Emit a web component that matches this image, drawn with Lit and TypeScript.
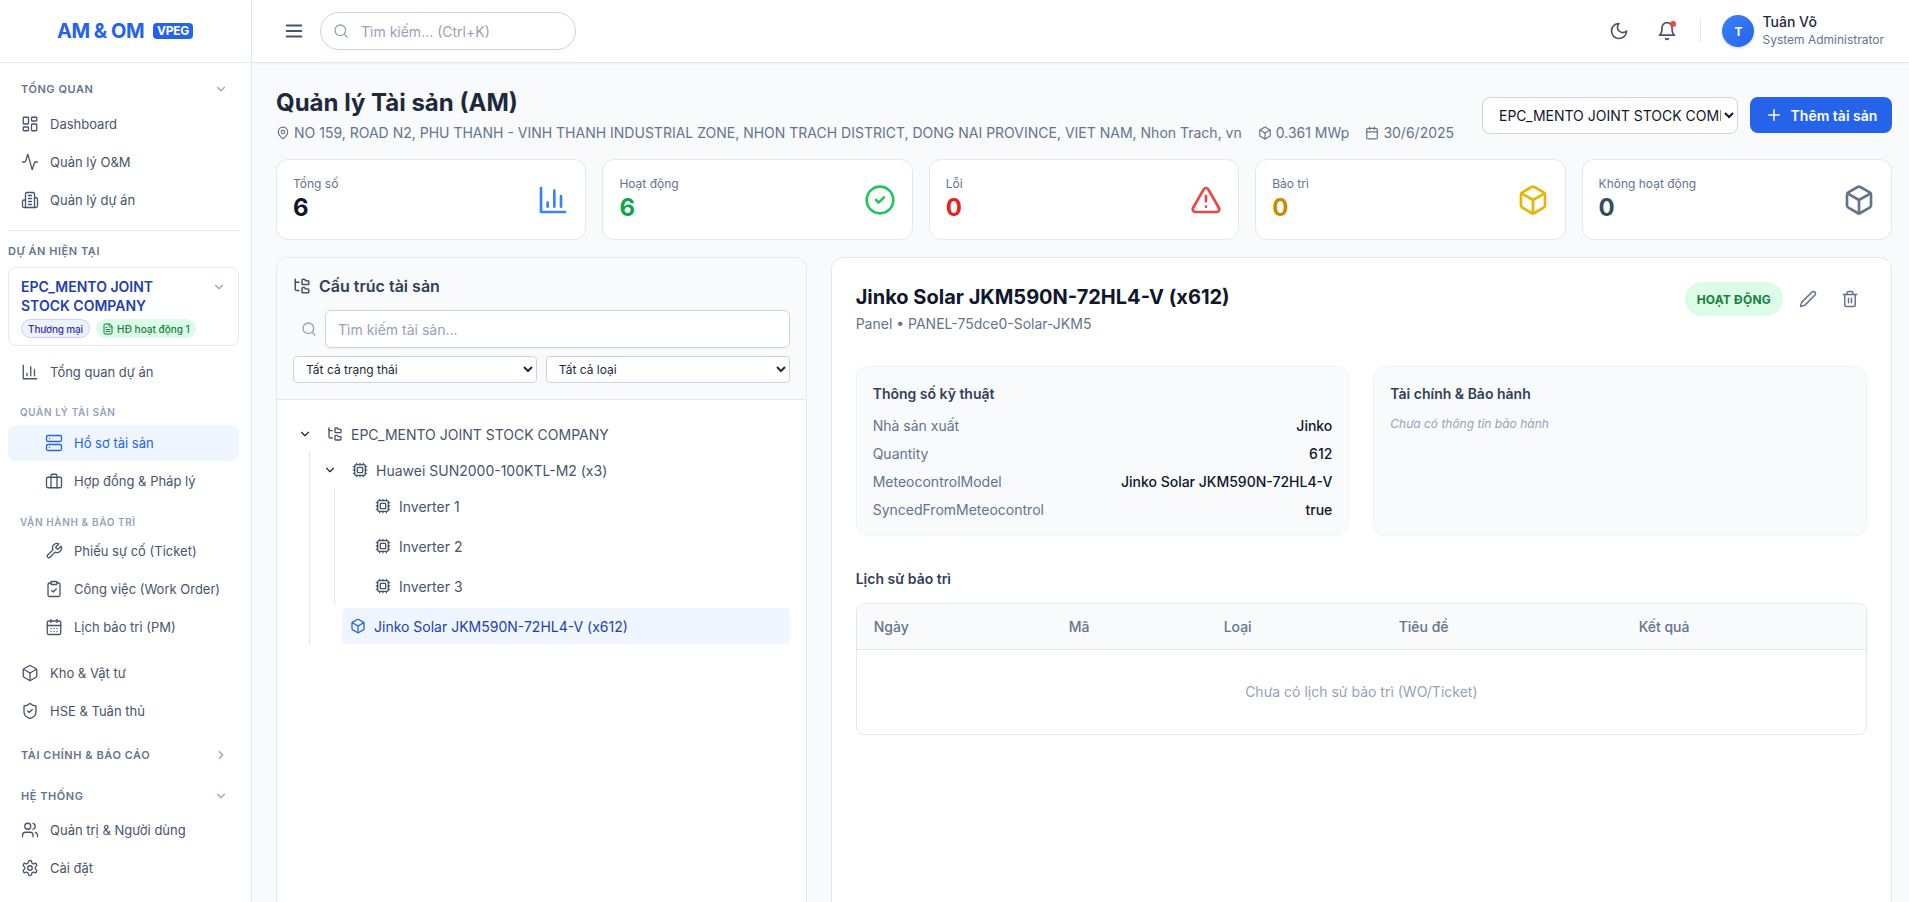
import { LitElement, html, svg, css } from 'lit';
import { customElement } from 'lit/decorators.js';

// lucide-style outlines, keyed by name
const ICONS: Record<string, unknown> = {
  dashboard: svg`<rect x="3" y="3" width="7" height="9" rx="1"/><rect x="14" y="3" width="7" height="5" rx="1"/><rect x="14" y="12" width="7" height="9" rx="1"/><rect x="3" y="16" width="7" height="5" rx="1"/>`,
  activity: svg`<path d="M22 12h-2.48a2 2 0 0 0-1.93 1.46l-2.35 8.36a.25.25 0 0 1-.48 0L9.24 2.18a.25.25 0 0 0-.48 0l-2.35 8.36A2 2 0 0 1 4.49 12H2"/>`,
  building: svg`<path d="M6 22V4a2 2 0 0 1 2-2h8a2 2 0 0 1 2 2v18Z"/><path d="M6 12H4a2 2 0 0 0-2 2v6a2 2 0 0 0 2 2h2"/><path d="M18 9h2a2 2 0 0 1 2 2v9a2 2 0 0 1-2 2h-2"/><path d="M10 6h4M10 10h4M10 14h4M10 18h4"/>`,
  chart: svg`<path d="M3 3v18h18"/><path d="M18 17V9"/><path d="M13 17V5"/><path d="M8 17v-3"/>`,
  server: svg`<rect x="2" y="2" width="20" height="8" rx="2"/><rect x="2" y="14" width="20" height="8" rx="2"/><path d="M6 6h.01M6 18h.01"/>`,
  briefcase: svg`<rect x="2" y="7" width="20" height="14" rx="2"/><path d="M16 21V5a2 2 0 0 0-2-2h-4a2 2 0 0 0-2 2v16"/>`,
  wrench: svg`<path d="M14.7 6.3a1 1 0 0 0 0 1.4l1.6 1.6a1 1 0 0 0 1.4 0l3.77-3.77a6 6 0 0 1-7.94 7.94l-6.91 6.91a2.12 2.12 0 0 1-3-3l6.91-6.91a6 6 0 0 1 7.94-7.94l-3.76 3.76z"/>`,
  clipboard: svg`<rect x="8" y="2" width="8" height="4" rx="1"/><path d="M16 4h2a2 2 0 0 1 2 2v14a2 2 0 0 1-2 2H6a2 2 0 0 1-2-2V6a2 2 0 0 1 2-2h2"/><path d="m9 14 2 2 4-4"/>`,
  calendarDays: svg`<path d="M8 2v4M16 2v4"/><rect x="3" y="4" width="18" height="18" rx="2"/><path d="M3 10h18M8 14h.01M12 14h.01M16 14h.01M8 18h.01M12 18h.01M16 18h.01"/>`,
  calendar: svg`<path d="M8 2v4M16 2v4"/><rect x="3" y="4" width="18" height="18" rx="2"/><path d="M3 10h18"/>`,
  box: svg`<path d="M21 8a2 2 0 0 0-1-1.73l-7-4a2 2 0 0 0-2 0l-7 4A2 2 0 0 0 3 8v8a2 2 0 0 0 1 1.73l7 4a2 2 0 0 0 2 0l7-4A2 2 0 0 0 21 16Z"/><path d="m3.3 7 8.7 5 8.7-5"/><path d="M12 22V12"/>`,
  shield: svg`<path d="M20 13c0 5-3.5 7.5-7.66 8.95a1 1 0 0 1-.67-.01C7.5 20.5 4 18 4 13V6a1 1 0 0 1 1-1c2 0 4.5-1.2 6.24-2.72a1.17 1.17 0 0 1 1.52 0C14.51 3.81 17 5 19 5a1 1 0 0 1 1 1z"/><path d="m9 12 2 2 4-4"/>`,
  users: svg`<path d="M16 21v-2a4 4 0 0 0-4-4H6a4 4 0 0 0-4 4v2"/><circle cx="9" cy="7" r="4"/><path d="M22 21v-2a4 4 0 0 0-3-3.87"/><path d="M16 3.13a4 4 0 0 1 0 7.75"/>`,
  settings: svg`<path d="M12.22 2h-.44a2 2 0 0 0-2 2v.18a2 2 0 0 1-1 1.73l-.43.25a2 2 0 0 1-2 0l-.15-.08a2 2 0 0 0-2.73.73l-.22.38a2 2 0 0 0 .73 2.73l.15.1a2 2 0 0 1 1 1.72v.51a2 2 0 0 1-1 1.74l-.15.09a2 2 0 0 0-.73 2.73l.22.38a2 2 0 0 0 2.73.73l.15-.08a2 2 0 0 1 2 0l.43.25a2 2 0 0 1 1 1.73V20a2 2 0 0 0 2 2h.44a2 2 0 0 0 2-2v-.18a2 2 0 0 1 1-1.73l.43-.25a2 2 0 0 1 2 0l.15.08a2 2 0 0 0 2.73-.73l.22-.39a2 2 0 0 0-.73-2.73l-.15-.08a2 2 0 0 1-1-1.74v-.5a2 2 0 0 1 1-1.74l.15-.09a2 2 0 0 0 .73-2.73l-.22-.38a2 2 0 0 0-2.73-.73l-.15.08a2 2 0 0 1-2 0l-.43-.25a2 2 0 0 1-1-1.73V4a2 2 0 0 0-2-2z"/><circle cx="12" cy="12" r="3"/>`,
  file: svg`<path d="M15 2H6a2 2 0 0 0-2 2v16a2 2 0 0 0 2 2h12a2 2 0 0 0 2-2V7Z"/><path d="M14 2v4a2 2 0 0 0 2 2h4"/><path d="M10 9H8M16 13H8M16 17H8"/>`,
  down: svg`<path d="m6 9 6 6 6-6"/>`,
  right: svg`<path d="m9 18 6-6-6-6"/>`,
  menu: svg`<path d="M4 6h16M4 12h16M4 18h16"/>`,
  search: svg`<circle cx="11" cy="11" r="8"/><path d="m21 21-4.3-4.3"/>`,
  moon: svg`<path d="M12 3a6 6 0 0 0 9 9 9 9 0 1 1-9-9Z"/>`,
  bell: svg`<path d="M6 8a6 6 0 0 1 12 0c0 7 3 9 3 9H3s3-2 3-9"/><path d="M10.3 21a1.94 1.94 0 0 0 3.4 0"/>`,
  pin: svg`<path d="M20 10c0 6-8 12-8 12s-8-6-8-12a8 8 0 0 1 16 0Z"/><circle cx="12" cy="10" r="3"/>`,
  plus: svg`<path d="M5 12h14M12 5v14"/>`,
  check: svg`<circle cx="12" cy="12" r="10"/><path d="m9 12 2 2 4-4"/>`,
  alert: svg`<path d="m21.73 18-8-14a2 2 0 0 0-3.48 0l-8 14A2 2 0 0 0 4 21h16a2 2 0 0 0 1.73-3"/><path d="M12 9v4M12 17h.01"/>`,
  pencil: svg`<path d="M17 3a2.85 2.83 0 1 1 4 4L7.5 20.5 2 22l1.5-5.5Z"/>`,
  trash: svg`<path d="M3 6h18"/><path d="M19 6v14c0 1-1 2-2 2H7c-1 0-2-1-2-2V6"/><path d="M8 6V4c0-1 1-2 2-2h4c1 0 2 1 2 2v2"/><path d="M10 11v6M14 11v6"/>`,
  cpu: svg`<rect x="4" y="4" width="16" height="16" rx="2"/><rect x="8" y="8" width="8" height="8" rx="1"/><path d="M12 20v2M12 2v2M17 20v2M17 2v2M2 12h2M2 17h2M2 7h2M20 12h2M20 17h2M20 7h2M7 20v2M7 2v2"/>`,
  tree: svg`<path d="M20 10a1 1 0 0 0 1-1V6a1 1 0 0 0-1-1h-2.5a1 1 0 0 1-.8-.4l-.9-1.2A1 1 0 0 0 15 3h-2a1 1 0 0 0-1 1v5a1 1 0 0 0 1 1Z"/><path d="M20 21a1 1 0 0 0 1-1v-3a1 1 0 0 0-1-1h-2.9a1 1 0 0 1-.88-.55l-.42-.85a1 1 0 0 0-.92-.6H13a1 1 0 0 0-1 1v5a1 1 0 0 0 1 1Z"/><path d="M3 5a2 2 0 0 0 2 2h3"/><path d="M3 3v13a2 2 0 0 0 2 2h3"/>`,
};

const icon = (name: string, size = 18, width = 2) => html`
  <svg class="ic" width=${size} height=${size} viewBox="0 0 24 24" fill="none" stroke="currentColor"
    stroke-width=${width} stroke-linecap="round" stroke-linejoin="round">${ICONS[name]}</svg>
`;

const STATS = [
  { label: 'Tổng số', value: '6', color: '#0f172a', ic: 'chart', tone: '#3b82f6' },
  { label: 'Hoạt động', value: '6', color: '#16a34a', ic: 'check', tone: '#22c55e' },
  { label: 'Lỗi', value: '0', color: '#dc2626', ic: 'alert', tone: '#ef4444' },
  { label: 'Bảo trì', value: '0', color: '#ca8a04', ic: 'box', tone: '#eab308' },
  { label: 'Không hoạt động', value: '0', color: '#3b4a61', ic: 'box', tone: '#64748b' },
];

const SPECS = [
  ['Nhà sản xuất', 'Jinko'],
  ['Quantity', '612'],
  ['MeteocontrolModel', 'Jinko Solar JKM590N-72HL4-V'],
  ['SyncedFromMeteocontrol', 'true'],
];

const COLUMNS = [
  ['Ngày', 195],
  ['Mã', 155],
  ['Loại', 175],
  ['Tiêu đề', 240],
  ['Kết quả', 200],
] as const;

@customElement('app-sidebar')
export class AppSidebar extends LitElement {
  static override styles = css`
    :host {
      display: block;
      width: 252px;
      height: 902px;
      flex: none;
      background: #fff;
      border-right: 1px solid #e2e8f0;
      box-sizing: border-box;
      overflow: hidden;
    }
    .ic { flex: none; display: block; }
    .logo {
      height: 63px;
      box-sizing: border-box;
      border-bottom: 1px solid #e2e8f0;
      display: flex;
      align-items: center;
      justify-content: center;
      gap: 9px;
      padding-right: 1px;
    }
    .logo b {
      font-size: 20px;
      font-weight: 700;
      letter-spacing: -0.5px;
      color: #2563eb;
    }
    .logo span {
      background: #2563eb;
      color: #fff;
      font-size: 12px;
      font-weight: 700;
      line-height: 16px;
      padding: 0 4px;
      border-radius: 4px;
      letter-spacing: -0.3px;
    }
    nav { display: flex; flex-direction: column; padding: 12px 12px 0 8px; }
    .section {
      height: 28px;
      flex: none;
      display: flex;
      align-items: center;
      justify-content: space-between;
      padding: 0 11px 0 13px;
      font-size: 11px;
      font-weight: 600;
      letter-spacing: 0.55px;
      color: #64748b;
      margin-bottom: 3px;
    }
    .section .ic { color: #94a3b8; }
    .item {
      height: 36px;
      flex: none;
      margin-bottom: 2px;
      display: flex;
      align-items: center;
      gap: 11px;
      padding-left: 13px;
      font-size: 13px;
      color: #475569;
      border-radius: 8px;
    }
    .item.sub { padding-left: 37px; }
    .item.active { background: #eff6ff; color: #2563eb; }
    .rule { border-top: 1px solid #e2e8f0; margin: 10px 0 12px; }
    .current {
      font-size: 11px;
      line-height: 16px;
      font-weight: 600;
      letter-spacing: 0.55px;
      color: #64748b;
      margin-bottom: 8px;
    }
    .project {
      height: 79px;
      flex: none;
      box-sizing: border-box;
      border: 1px solid #e2e8f0;
      border-radius: 8px;
      padding: 9px 12px 0;
      margin-bottom: 8px;
    }
    .project-top { display: flex; justify-content: space-between; }
    .project-name {
      font-size: 14px;
      line-height: 19px;
      font-weight: 600;
      color: #1e40af;
      width: 160px;
    }
    .project-top .ic { color: #94a3b8; margin: 3px 0 0; }
    .chips { display: flex; gap: 6px; margin-top: 4px; }
    .chip {
      height: 19px;
      box-sizing: border-box;
      display: flex;
      align-items: center;
      gap: 3px;
      border-radius: 10px;
      font-size: 10px;
      font-weight: 500;
    }
    .chip.kind { background: #eef2ff; border: 1px solid #c7d2fe; color: #3730a3; padding: 0 6px; letter-spacing: -0.15px; }
    .chip.live { background: #dcfce7; color: #15803d; padding: 0 6px; }
    .group {
      font-size: 10px;
      line-height: 16px;
      font-weight: 600;
      letter-spacing: 0.6px;
      color: #94a3b8;
      padding-left: 12px;
      margin-top: 12px;
      margin-bottom: 5px;
    }
    .group.ops { margin-top: 13px; margin-bottom: 3px; }
    .after-ops { margin-top: 8px; }
    .section.finance { margin-top: 10px; margin-bottom: 13px; }
    .section.system { margin-bottom: 2px; }
  `;

  private item(label: string, ic: string, cls = '') {
    return html`<div class="item ${cls}">${icon(ic, 18, 1.75)}<span>${label}</span></div>`;
  }

  override render() {
    return html`
      <div class="logo"><b>AM &amp; OM</b><span>VPEG</span></div>
      <nav>
        <div class="section">TỔNG QUAN ${icon('down', 14)}</div>
        ${this.item('Dashboard', 'dashboard')}
        ${this.item('Quản lý O&M', 'activity')}
        ${this.item('Quản lý dự án', 'building')}
        <div class="rule"></div>
        <div class="current">DỰ ÁN HIỆN TẠI</div>
        <div class="project">
          <div class="project-top">
            <div class="project-name">EPC_MENTO JOINT STOCK COMPANY</div>
            ${icon('down', 14)}
          </div>
          <div class="chips">
            <span class="chip kind">Thương mại</span>
            <span class="chip live">${icon('file', 12)}HĐ hoạt động 1</span>
          </div>
        </div>
        ${this.item('Tổng quan dự án', 'chart')}
        <div class="group">QUẢN LÝ TÀI SẢN</div>
        ${this.item('Hồ sơ tài sản', 'server', 'sub active')}
        ${this.item('Hợp đồng & Pháp lý', 'briefcase', 'sub')}
        <div class="group ops">VẬN HÀNH & BẢO TRÌ</div>
        ${this.item('Phiếu sự cố (Ticket)', 'wrench', 'sub')}
        ${this.item('Công việc (Work Order)', 'clipboard', 'sub')}
        ${this.item('Lịch bảo trì (PM)', 'calendarDays', 'sub')}
        <div class="after-ops">
          ${this.item('Kho & Vật tư', 'box')}
          ${this.item('HSE & Tuân thủ', 'shield')}
        </div>
        <div class="section finance">TÀI CHÍNH & BÁO CÁO ${icon('right', 14)}</div>
        <div class="section system">HỆ THỐNG ${icon('down', 14)}</div>
        ${this.item('Quản trị & Người dùng', 'users')}
        ${this.item('Cài đặt', 'settings')}
      </nav>
    `;
  }
}

@customElement('app-topbar')
export class AppTopbar extends LitElement {
  static override styles = css`
    :host {
      display: flex;
      align-items: center;
      height: 63px;
      flex: none;
      box-sizing: border-box;
      background: #fff;
      border-bottom: 1px solid #e2e8f0;
      box-shadow: 0 1px 2px rgba(15, 23, 42, 0.04);
      padding: 0 25px 0 31px;
    }
    .ic { flex: none; display: block; }
    .burger { color: #475569; margin-right: 15px; }
    .search {
      width: 256px;
      height: 38px;
      box-sizing: border-box;
      border: 1px solid #cbd5e1;
      border-radius: 19px;
      display: flex;
      align-items: center;
      gap: 12px;
      padding-left: 12px;
      font-size: 14px;
      color: #94a3b8;
    }
    .spacer { flex: 1; }
    .tool { color: #475569; position: relative; }
    .moon { margin-right: 28px; }
    .dot {
      position: absolute;
      top: 0;
      right: 1px;
      width: 6px;
      height: 6px;
      border-radius: 50%;
      background: #ef4444;
    }
    .divider { width: 1px; height: 24px; background: #e2e8f0; margin: 0 21px 0 23px; }
    .avatar {
      width: 32px;
      height: 32px;
      border-radius: 50%;
      background: linear-gradient(135deg, #3b82f6, #2563eb);
      color: #fff;
      font-size: 12px;
      font-weight: 700;
      display: flex;
      align-items: center;
      justify-content: center;
      box-shadow: 0 1px 3px rgba(15, 23, 42, 0.2);
      margin-right: 8px;
    }
    .name { font-size: 14px; line-height: 18px; font-weight: 500; color: #1e293b; }
    .role { font-size: 12px; line-height: 18px; color: #64748b; }
  `;

  override render() {
    return html`
      <span class="burger">${icon('menu', 22)}</span>
      <div class="search">${icon('search', 16)}<span>Tìm kiếm... (Ctrl+K)</span></div>
      <div class="spacer"></div>
      <span class="tool moon">${icon('moon', 20)}</span>
      <span class="tool">${icon('bell', 20)}<i class="dot"></i></span>
      <div class="divider"></div>
      <div class="avatar">T</div>
      <div>
        <div class="name">Tuân Võ</div>
        <div class="role">System Administrator</div>
      </div>
    `;
  }
}

@customElement('asset-tree')
export class AssetTree extends LitElement {
  static override styles = css`
    :host {
      display: block;
      flex: 0 0 calc((100% - 24px) / 3);
      box-sizing: border-box;
      background: #fff;
      border: 1px solid #e2e8f0;
      border-radius: 12px;
      min-height: 800px;
      overflow: hidden;
    }
    .ic { flex: none; display: block; }
    .head {
      background: #f8fafc;
      border-bottom: 1px solid #e2e8f0;
      padding: 16px 16px 15px;
      height: 142px;
      box-sizing: border-box;
    }
    .title {
      display: flex;
      align-items: center;
      gap: 8px;
      height: 24px;
      font-size: 16px;
      font-weight: 600;
      color: #334155;
    }
    .title .ic { color: #475569; }
    .find { display: flex; align-items: center; gap: 8px; margin-top: 12px; }
    .find > .ic { color: #94a3b8; margin-left: 8px; }
    .find input {
      flex: 1;
      height: 38px;
      box-sizing: border-box;
      border: 1px solid #cbd5e1;
      border-radius: 6px;
      padding: 0 12px;
      font: 14px Inter, sans-serif;
      background: #fff;
      box-shadow: 0 1px 2px rgba(15, 23, 42, 0.05);
    }
    .find input::placeholder { color: #94a3b8; opacity: 1; }
    .filters { display: grid; grid-template-columns: 1fr 1fr; gap: 9px; margin-top: 8px; }
    select {
      height: 27px;
      width: 100%;
      box-sizing: border-box;
      border: 1px solid #cbd5e1;
      border-radius: 4px;
      background: #fff;
      color: #1e293b;
      padding: 0 8px;
      font: 12px Inter, sans-serif;
    }
    .tree { padding: 16px; display: flex; flex-direction: column; }
    .row { display: flex; align-items: center; height: 36px; font-size: 14px; color: #475569; }
    .toggle {
      width: 26px;
      height: 36px;
      flex: none;
      display: flex;
      align-items: center;
      padding-left: 5px;
      box-sizing: border-box;
      color: #1e293b;
    }
    .gap { width: 24px; flex: none; }
    .label {
      flex: 1;
      height: 36px;
      display: flex;
      align-items: center;
      gap: 8px;
      padding-left: 8px;
      border-radius: 4px;
    }
    .label.on { background: #eff6ff; color: #1e40af; }
    .label.on .ic { color: #2563eb; }
    .kids {
      margin-left: 16px;
      border-left: 1px solid #e2e8f0;
      padding-left: 8px;
      display: flex;
      flex-direction: column;
      gap: 4px;
    }
  `;

  private leaf(name: string, ic: string, on = false) {
    return html`<div class="row">
      <span class="gap"></span>
      <span class="label ${on ? 'on' : ''}">${icon(ic, 16)}${name}</span>
    </div>`;
  }

  private branch(name: string, ic: string) {
    return html`<div class="row">
      <span class="toggle">${icon('down', 14)}</span>
      <span class="label">${icon(ic, 16)}${name}</span>
    </div>`;
  }

  override render() {
    return html`
      <div class="head">
        <div class="title">${icon('tree', 18)}Cấu trúc tài sản</div>
        <div class="find">
          ${icon('search', 16)}
          <input placeholder="Tìm kiếm tài sản..." />
        </div>
        <div class="filters">
          <select><option>Tất cả trạng thái</option></select>
          <select><option>Tất cả loại</option></select>
        </div>
      </div>
      <div class="tree">
        ${this.branch('EPC_MENTO JOINT STOCK COMPANY', 'tree')}
        <div class="kids">
          <div>
            ${this.branch('Huawei SUN2000-100KTL-M2 (x3)', 'cpu')}
            <div class="kids">
              ${this.leaf('Inverter 1', 'cpu')}
              ${this.leaf('Inverter 2', 'cpu')}
              ${this.leaf('Inverter 3', 'cpu')}
            </div>
          </div>
          ${this.leaf('Jinko Solar JKM590N-72HL4-V (x612)', 'box', true)}
        </div>
      </div>
    `;
  }
}

@customElement('asset-detail')
export class AssetDetail extends LitElement {
  static override styles = css`
    :host {
      display: block;
      flex: 1 1 0;
      min-width: 0;
      background: #fff;
      border: 1px solid #e2e8f0;
      border-radius: 12px;
      min-height: 800px;
      padding: 24px;
    }
    .ic { flex: none; display: block; }
    .top { display: flex; justify-content: space-between; align-items: flex-start; height: 84px; }
    h2 { margin: 0; font-size: 20px; line-height: 30px; font-weight: 700; color: #0f172a; }
    .sub { font-size: 14px; line-height: 20px; margin-top: 2px; color: #64748b; }
    .actions { display: flex; align-items: center; gap: 8px; }
    .badge {
      height: 34px;
      display: flex;
      align-items: center;
      padding: 0 12px;
      border-radius: 17px;
      background: #dcfce7;
      color: #15803d;
      font-size: 12px;
      font-weight: 700;
      letter-spacing: 0.2px;
    }
    .btn { width: 34px; height: 34px; display: flex; align-items: center; justify-content: center; color: #64748b; }
    .cards { display: grid; grid-template-columns: 1fr 1fr; gap: 24px; }
    .card {
      height: 170px;
      box-sizing: border-box;
      background: #f8fafc;
      border: 1px solid #f1f5f9;
      border-radius: 12px;
      padding: 17px 16px;
    }
    h3 { margin: 0 0 12px; font-size: 14px; line-height: 20px; font-weight: 600; color: #334155; }
    .spec { display: flex; justify-content: space-between; font-size: 14px; line-height: 20px; margin-bottom: 8px; color: #64748b; }
    .spec b { font-weight: 500; color: #0f172a; }
    .none { font-size: 12px; line-height: 16px; font-style: italic; color: #94a3b8; }
    h4 { margin: 33px 0 14px; font-size: 14px; line-height: 20px; font-weight: 600; color: #334155; }
    .table { border: 1px solid #e2e8f0; border-radius: 8px; overflow: hidden; }
    .thead {
      display: flex;
      height: 45px;
      align-items: center;
      padding-left: 17px;
      background: #f8fafc;
      border-bottom: 1px solid #e2e8f0;
      font-size: 14px;
      font-weight: 500;
      color: #64748b;
    }
    .empty {
      height: 84px;
      padding-bottom: 2px;
      box-sizing: border-box;
      display: flex;
      align-items: center;
      justify-content: center;
      font-size: 14px;
      color: #94a3b8;
    }
  `;

  override render() {
    return html`
      <div class="top">
        <div>
          <h2>Jinko Solar JKM590N-72HL4-V (x612)</h2>
          <div class="sub">Panel • PANEL-75dce0-Solar-JKM5</div>
        </div>
        <div class="actions">
          <span class="badge">HOẠT ĐỘNG</span>
          <span class="btn">${icon('pencil', 18)}</span>
          <span class="btn">${icon('trash', 18)}</span>
        </div>
      </div>
      <div class="cards">
        <div class="card">
          <h3>Thông số kỹ thuật</h3>
          ${SPECS.map(([k, v]) => html`<div class="spec"><span>${k}</span><b>${v}</b></div>`)}
        </div>
        <div class="card">
          <h3>Tài chính & Bảo hành</h3>
          <div class="none">Chưa có thông tin bảo hành</div>
        </div>
      </div>
      <h4>Lịch sử bảo trì</h4>
      <div class="table">
        <div class="thead">
          ${COLUMNS.map(([c, w]) => html`<span style="width:${w}px">${c}</span>`)}
        </div>
        <div class="empty">Chưa có lịch sử bảo trì (WO/Ticket)</div>
      </div>
    `;
  }
}

@customElement('app-root')
export class AppRoot extends LitElement {
  static override styles = css`
    :host {
      display: flex;
      height: 902px;
      overflow: hidden;
      background: #f8fafc;
      font-family: Inter, "Noto Sans", sans-serif;
      color: #0f172a;
    }
    .ic { flex: none; display: block; }
    .main { flex: 1; min-width: 0; display: flex; flex-direction: column; }
    .content { flex: 1; min-height: 0; overflow: hidden; padding: 24px 17px 0 24px; }
    .head { display: flex; justify-content: space-between; align-items: flex-start; height: 72px; }
    h1 { margin: 0; font-size: 24px; line-height: 32px; font-weight: 700; color: #1e293b; }
    .meta { display: flex; align-items: center; margin-top: 4px; font-size: 14px; line-height: 20px; color: #64748b; white-space: nowrap; }
    .meta span { display: flex; align-items: center; gap: 4px; margin-right: 16px; }
    .controls { display: flex; gap: 12px; margin-top: 10px; }
    .controls select {
      width: 256px;
      height: 37px;
      box-sizing: border-box;
      border: 1px solid #cbd5e1;
      border-radius: 8px;
      background: #fff;
      color: #0f172a;
      padding: 0 0 0 12px;
      font: 14px Inter, sans-serif;
    }
    .add {
      width: 142px;
      height: 36px;
      display: flex;
      align-items: center;
      justify-content: center;
      gap: 8px;
      background: #2563eb;
      color: #fff;
      border-radius: 8px;
      font-size: 14px;
      font-weight: 600;
    }
    .stats { display: grid; grid-template-columns: repeat(5, 1fr); gap: 16px; }
    .stat {
      height: 81px;
      box-sizing: border-box;
      display: flex;
      align-items: center;
      justify-content: space-between;
      background: #fff;
      border: 1px solid #e2e8f0;
      border-radius: 12px;
      padding: 0 16px;
    }
    .stat-label { font-size: 12px; line-height: 16px; color: #64748b; }
    .stat-value { font-size: 24px; line-height: 32px; font-weight: 700; }
    .panels { display: flex; gap: 24px; margin-top: 17px; }
  `;

  override render() {
    return html`
      <app-sidebar></app-sidebar>
      <div class="main">
        <app-topbar></app-topbar>
        <div class="content">
          <div class="head">
            <div>
              <h1>Quản lý Tài sản (AM)</h1>
              <div class="meta">
                <span>${icon('pin', 14)}NO 159, ROAD N2, PHU THANH - VINH THANH INDUSTRIAL ZONE, NHON TRACH DISTRICT, DONG NAI PROVINCE, VIET NAM, Nhon Trach, vn</span>
                <span>${icon('box', 14)}0.361 MWp</span>
                <span>${icon('calendar', 14)}30/6/2025</span>
              </div>
            </div>
            <div class="controls">
              <select><option>EPC_MENTO JOINT STOCK COMPANY</option></select>
              <div class="add">${icon('plus', 18)}Thêm tài sản</div>
            </div>
          </div>
          <div class="stats">
            ${STATS.map(
              (s) => html`
                <div class="stat">
                  <div>
                    <div class="stat-label">${s.label}</div>
                    <div class="stat-value" style="color:${s.color}">${s.value}</div>
                  </div>
                  <span style="color:${s.tone}">${icon(s.ic, 32)}</span>
                </div>
              `,
            )}
          </div>
          <div class="panels">
            <asset-tree></asset-tree>
            <asset-detail></asset-detail>
          </div>
        </div>
      </div>
    `;
  }
}
